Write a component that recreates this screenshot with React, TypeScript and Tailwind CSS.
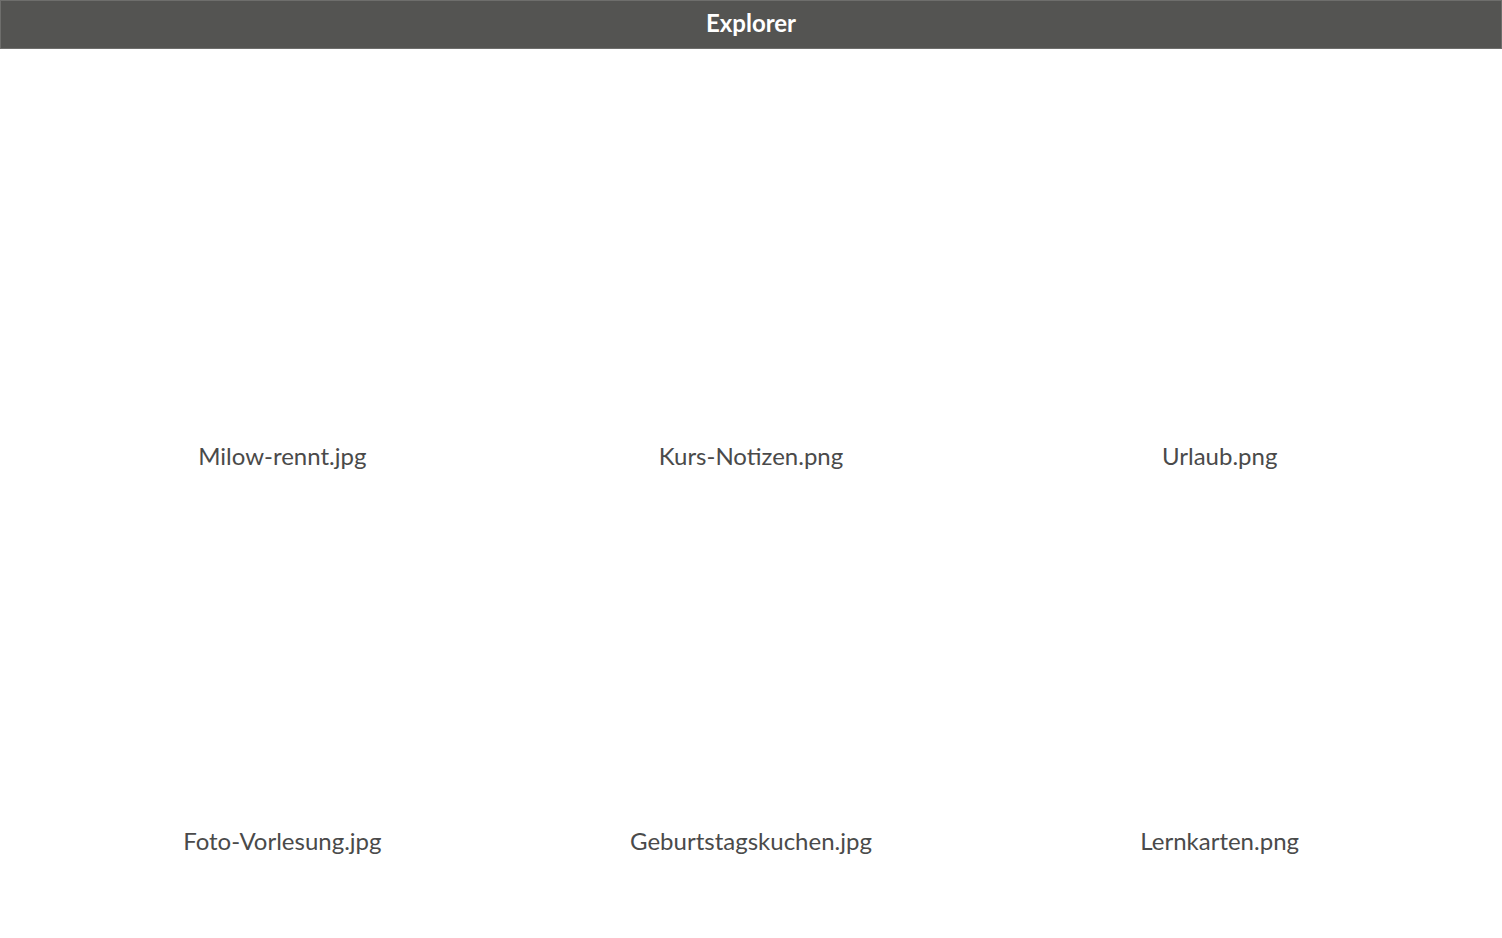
import React from "react";

const files = [
  "Milow-rennt.jpg",
  "Kurs-Notizen.png",
  "Urlaub.png",
  "Foto-Vorlesung.jpg",
  "Geburtstagskuchen.jpg",
  "Lernkarten.png",
];

export default function App() {
  return (
    <div className="min-h-screen bg-white" style={{ fontFamily: "Lato, 'Open Sans', sans-serif" }}>
      <header className="h-[49px] bg-[#545452] border border-[#6e6e6c] flex items-center justify-center pb-[3px]">
        <h1 className="text-white text-[24px] font-bold leading-none">Explorer</h1>
      </header>
      <main className="grid grid-cols-3 px-12 pt-[43px] gap-y-[7px]">
        {files.map((f) => (
          <div key={f} className="flex flex-col items-center">
            <div className="h-[350px] w-full" />
            <span className="text-[24px] leading-[28px] text-[#4a4a4a]">{f}</span>
          </div>
        ))}
      </main>
    </div>
  );
}
